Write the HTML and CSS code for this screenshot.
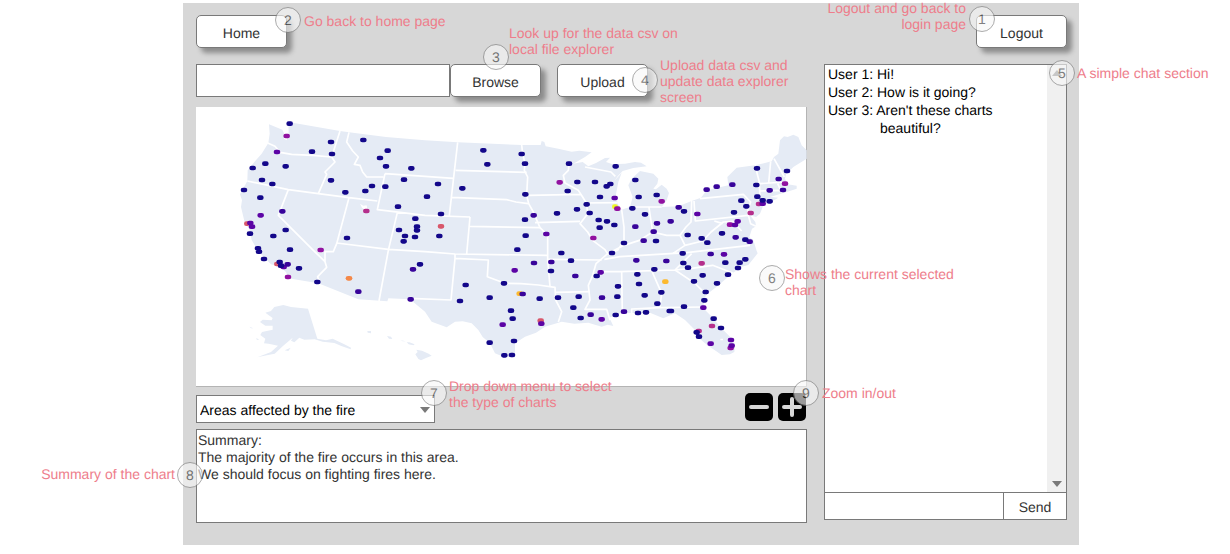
FILE: index.html
```html
<!DOCTYPE html>
<html lang="en">
<head>
<meta charset="utf-8">
<title>Data explorer</title>
<link rel="stylesheet" href="styles.css">
</head>
<body>
<main class="panel">
  <header class="topbar">
    <div class="anchor">
      <button class="btn" type="button">Home</button>
      <span class="marker m2">2</span>
      <p class="note n2">Go back to home page</p>
    </div>
    <div class="anchor">
      <button class="btn" type="button">Logout</button>
      <span class="marker m1">1</span>
      <p class="note n1">Logout and go back to<br>login page</p>
    </div>
  </header>

  <section class="explorer">
    <div class="upload">
      <input class="file" type="text" aria-label="Data csv">
      <div class="anchor">
        <button class="btn" type="button">Browse</button>
        <span class="marker m3">3</span>
        <p class="note n3">Look up for the data csv on<br>local file explorer</p>
      </div>
      <div class="anchor second">
        <button class="btn" type="button">Upload</button>
        <span class="marker m4">4</span>
        <p class="note n4">Upload data csv and<br>update data explorer<br>screen</p>
      </div>
    </div>

    <div class="chart">
      <svg class="map" viewBox="0 0 1833 840" role="img" aria-label="Map of areas affected by the fire">
        <g fill="#e5ebf5">
          <path d="M219 52L259 68L267 85L264 95L272 100L278 75L277 45L432 72L459 76L570 90L687 100L785 106L977 114L1034 114L1037 102L1045 105L1049 118L1087 125L1127 134L1150 131L1187 136L1167 150L1132 170L1160 165L1177 178L1200 168L1227 153L1242 152L1230 165L1250 172L1287 170L1317 165L1335 167L1352 178L1312 183L1280 192L1265 208L1255 222L1277 197L1267 225L1260 262L1265 290L1277 308L1290 304L1302 300L1310 270L1297 235L1307 215L1318 205L1332 192L1372 200L1387 215L1384 230L1372 245L1380 247L1397 233L1412 245L1419 258L1412 280L1397 300L1447 298L1487 282L1515 272L1532 250L1597 235L1594 210L1622 182L1677 175L1727 163L1734 150L1747 140L1752 100L1764 88L1775 90L1792 83L1807 90L1817 115L1832 130L1832 155L1792 180L1770 202L1767 215L1775 232L1802 236L1802 245L1772 255L1722 270L1747 272L1725 285L1702 295L1692 320L1680 330L1662 325L1678 345L1680 358L1668 365L1660 390L1672 400L1682 432L1685 439L1657 474L1635 480L1612 497L1590 515L1562 539L1530 564L1524 585L1522 604L1552 634L1572 659L1602 689L1617 714L1615 735L1602 742L1577 744L1560 732L1537 717L1504 689L1497 669L1467 639L1437 619L1402 634L1362 617L1300 618L1272 619L1240 632L1252 657L1235 653L1217 659L1177 647L1135 650L1097 644L1047 659L1020 677L987 689L957 709L957 751L922 749L897 739L882 709L860 690L847 669L827 649L800 643L777 644L752 661L707 644L687 614L642 577L577 574L574 583L487 577L367 529L277 514L270 495L252 479L225 472L207 454L185 430L167 399L160 365L147 350L135 300L138 280L132 262L154 222L155 190L175 165L197 140L217 108L221 80Z"/>
          <path d="M208 617L225 612L235 600L262 594L285 600L336 605L364 695L390 700L410 695L445 712L465 722L464 727L438 718L415 708L395 706L380 704L356 697L325 698L310 692L295 706L285 701L290 692L260 718L236 740L205 746L184 751L225 735L246 716L218 710L204 709L208 695L193 684L198 675L230 668L230 656L208 656L192 645L200 638L227 640L230 633Z"/>
          <path d="M160 659L172 664L165 664ZM180 694L190 697L183 699ZM266 730L284 722L277 732ZM514 672L525 672L525 679L515 677ZM573 687L585 689L589 696L579 695ZM613 700L630 703L620 703ZM632 706L640 706L656 712L652 715L638 712ZM661 728L678 731L698 740L707 746L690 753L675 760L667 756L658 742L665 735Z"/>
        </g>
        <g fill="none" stroke="#fff" stroke-width="5" stroke-linejoin="round">
          <path d="M215 108L237 118L252 136L287 142L350 145L407 150M432 72L407 150L417 165L387 195L392 202L367 260M154 222L277 248L367 260L459 272L544 282M277 248L247 325L352 430L387 464L392 481L365 509L370 524M459 272L422 410L412 434L387 434L387 464M422 408L577 427L687 434L777 441L1054 445M604 317L577 430L549 582M459 76L452 105L470 132L487 150L475 172L492 175L500 195L512 210L562 210M567 200L544 308L687 325L822 330M567 200L687 208L772 214M785 106L760 325M779 190L992 196M767 271L932 278L960 285L997 290M822 358L1032 362M822 330L812 441"/>
          <path d="M977 114L980 140L987 170L985 190L995 210L992 265L998 290L1012 315L1032 362L1055 385L1055 460L1062 539M999 265L1154 262M1017 347L1152 343M1119 172L1117 190L1102 205L1107 228L1147 250L1160 270L1172 290L1175 320L1152 350L1175 375L1190 400L1227 428L1235 440L1200 470L1190 505L1177 535L1182 579L1167 607L1232 607L1242 640M1162 288L1265 287M1167 180L1245 195L1258 208M1277 308L1284 360L1284 400L1265 430L1235 440M1359 302L1370 375M1302 300L1397 300M1235 440L1284 415L1330 400L1370 375L1412 385L1452 385L1470 360L1485 345L1487 282M1494 282L1498 342L1657 325M1512 275L1642 262L1664 285L1655 310L1657 325L1664 350L1680 358"/>
          <path d="M1452 385L1467 415L1520 402L1545 375L1582 345L1610 343L1637 372M1555 342L1580 350M1225 457L1272 449L1472 437L1662 415M1467 415L1430 440M1210 494L1272 494L1437 489L1487 484L1550 475L1612 499M1437 489L1487 440M1057 457L1217 459M1077 556L1182 554M777 441L777 454L877 459L874 509L927 529L975 530L1027 534L1077 541L1079 579L1097 614L1087 645M777 454L765 579L642 574M1277 494L1279 618M1367 491L1397 559L1392 599M1307 618L1307 606L1392 602L1522 600M1437 489L1497 529L1530 562M1677 175L1690 225L1692 275M1692 230L1770 225M1692 252L1758 250M1724 163L1718 228M1734 155L1765 210M1745 230L1758 258"/>
        </g>
        <path fill="#fff" d="M492 290L502 296L512 295L514 306L506 308L498 302ZM1573 695L1581 695L1581 700L1573 700Z"/>
        <g class="dots">
          <path stroke="#f0f921" d="M1255 299h4"/>
          <path stroke="#fcb92e" d="M1405 524h6M968 560h6"/>
          <path stroke="#f48849" d="M456 514h6"/>
          <path stroke="#d8576b" d="M732 358h6M151 350h4M1031 641h6M241 471h4"/>
          <path stroke="#b52f8c" d="M508 312h6M1514 469h6M1545 657h6M1661 318h6M1505 672h6M1686 291h4"/>
          <path stroke="#9111a0" d="M269 87h6M371 429h6M1088 226h6M1261 305h6M1394 283h6M1764 230h6M1599 353h6M1189 393h6M273 510h6M1601 723h6"/>
          <path stroke="#5c04a5" d="M240 135h6M191 325h6M160 348h6M165 359h6M1253 273h6M1048 381h6M1501 321h6M1622 343h6M1614 354h6M1697 290h6M1581 442h6M260 480h6M917 653h6M1033 650h6M1214 637h6M1541 710h6M1602 699h6M1604 716h6M1519 602h6M953 490h6M1211 496h6"/>
          <path stroke="#38049a" d="M256 313h6M1010 325h6M1445 301h6M1421 343h6M1380 349h6M1370 374h6M1340 401h6M1315 359h6M1758 249h6M1718 250h6M1616 391h6M1658 404h6M272 472h6M484 554h6M648 487h6M1011 468h6M1063 465h6M1135 507h6M977 561h6M1215 572h6M1181 623h6M1281 614h6M1318 460h6M1408 462h6M1559 239h6M1529 248h6M1606 233h6M1745 216h6M1541 441h6M641 577h6"/>
          <path stroke="#13078a" d="M278 50h6M402 105h6M345 134h6M405 141h6M499 99h6M572 131h6M549 153h6M567 178h6M643 184h6M205 170h6M167 183h6M266 178h6M195 219h6M226 231h6M141 249h6M190 272h6M402 220h6M445 256h6M505 252h6M525 237h6M565 239h6M621 218h6M603 299h6M655 335h6M606 369h6M660 359h6M660 370h6M654 390h6M624 387h6M620 403h6M450 393h6M266 369h6M229 387h6M159 380h6M279 428h6M183 424h6M186 434h6"/>
          <path stroke="#13078a" d="M859 130h6M871 172h6M974 141h6M984 170h6M1116 170h6M1256 178h6M1141 225h6M1194 225h6M1229 238h6M1240 231h6M1112 252h6M1209 270h6M985 262h6M796 244h6M723 231h6M690 269h6M732 321h6M727 387h6M984 338h6M986 386h6M1080 319h6M1140 307h6M1169 292h6M1178 318h6M1205 339h6M1230 343h6M1208 362h6M1252 354h6M1281 408h6M961 428h6"/>
          <path stroke="#13078a" d="M1315 219h6M1325 270h6M1379 264h6M1306 304h6M1344 322h6M1461 313h6M1377 402h6M1472 384h6M1514 394h6M1531 407h6M1575 379h6M1611 316h6M1648 298h6M1633 281h6M1681 269h6M1697 280h6M1718 283h6M1678 234h6M1680 184h6M1770 192h6M1645 398h6"/>
          <path stroke="#13078a" d="M201 456h6M248 465h6M252 476h6M306 484h6M361 525h6M669 472h6M806 534h6M789 582h6M878 572h6M921 529h6M942 611h6M947 635h6M951 702h6M878 707h6M922 745h6M945 744h6M1028 575h6M1083 572h6M1145 569h6M1129 602h6M1151 633h6M1062 492h6M1093 438h6M1122 461h6M1245 438h6M1199 507h6M1263 538h6M1261 569h6M1256 624h6"/>
          <path stroke="#13078a" d="M1457 439h6M1459 468h6M1473 482h6M1585 467h6M1628 467h6M1645 457h6M1623 483h6M1593 503h6M1560 529h6M1517 505h6M1491 523h6M1526 555h6M1522 580h6M1461 599h6M1393 556h6M1381 590h6M1418 612h10M1372 487h6M1321 502h6M1326 531h6M1343 565h6M1323 618h6M1347 616h6M1550 635h6M1572 663h6M1499 676h6M1506 689h6"/>
        </g>
      </svg>
      <span class="marker m6">6</span>
      <p class="note n6">Shows the current selected<br>chart</p>
    </div>

    <div class="tools">
      <div class="anchor picker">
        <select class="select" aria-label="Type of chart">
          <option>Areas affected by the fire</option>
        </select>
        <svg class="caret" viewBox="0 0 10 6" aria-hidden="true"><path d="M0 0h10L5 6z"/></svg>
        <span class="marker m7">7</span>
        <p class="note n7">Drop down menu to select<br>the type of charts</p>
      </div>
      <div class="anchor zoom">
        <button class="icon" type="button" aria-label="Zoom out"><svg viewBox="0 0 28 28"><rect width="28" height="28" rx="5"/><path d="M6 14h16"/></svg></button>
        <button class="icon" type="button" aria-label="Zoom in"><svg viewBox="0 0 28 28"><rect width="28" height="28" rx="5"/><path d="M6 14h16M14 6v16"/></svg></button>
        <span class="marker m9">9</span>
        <p class="note n9">Zoom in/out</p>
      </div>
    </div>

    <div class="summary">
      <p>Summary:</p>
      <p>The majority of the fire occurs in this area.</p>
      <p>We should focus on fighting fires here.</p>
      <span class="marker m8">8</span>
      <p class="note n8">Summary of the chart</p>
    </div>
  </section>

  <section class="chat">
    <div class="log">
      <ul class="messages">
        <li>User 1: Hi!</li>
        <li>User 2: How is it going?</li>
        <li>User 3: Aren't these charts<span class="wrapped">beautiful?</span></li>
      </ul>
      <div class="scroll" aria-hidden="true">
        <svg viewBox="0 0 10 6"><path d="M0 6h10L5 0z"/></svg>
        <svg viewBox="0 0 10 6"><path d="M0 0h10L5 6z"/></svg>
      </div>
    </div>
    <form class="compose">
      <input class="message" type="text" aria-label="Message">
      <button class="send" type="button">Send</button>
    </form>
    <span class="marker m5">5</span>
    <p class="note n5">A simple chat section</p>
  </section>
</main>
</body>
</html>
```
FILE: styles.css
```css
* { box-sizing: border-box; }
body {
  margin: 0;
  background: #fff;
  color: #333;
  font: 14px/16px "Liberation Sans", Arial, sans-serif;
  text-rendering: geometricPrecision;
}
p, ul { margin: 0; padding: 0; }
button, input, select { font: inherit; color: inherit; margin: 0; text-rendering: inherit; }

.panel {
  display: grid;
  grid-template-columns: minmax(0, 1fr) 243px;
  gap: 16px 17px;
  margin: 3px 151px 8px 183px;
  padding: 12px 12px 22px 13px;
  background: #d7d7d7;
}
.topbar {
  grid-column: 1 / -1;
  display: flex;
  justify-content: space-between;
}
.anchor { position: relative; }
.btn {
  display: block;
  width: 91px;
  height: 33px;
  padding: 2px 0 0;
  border: 1px solid #797979;
  border-radius: 5px;
  background: #fff;
  box-shadow: 5px 5px 5px rgba(0, 0, 0, .35);
}

.upload { display: flex; margin-bottom: 10px; }
.second { margin-left: 16px; }
.file {
  width: 254px;
  height: 33px;
  border: 1px solid #797979;
  background: #fff;
}

.chart {
  position: relative;
  background: #fff;
  box-shadow: inset -1px -1px #b4b4b4;
}
.map { display: block; width: 100%; height: auto; }
.dots { fill: none; stroke-width: 14; stroke-linecap: round; }

.tools {
  display: flex;
  justify-content: space-between;
  height: 30px;
  margin: 6px 0;
}
.picker { align-self: flex-end; width: 239px; }
.select {
  display: block;
  width: 100%;
  height: 28px;
  padding: 2px 3px 0;
  border: 1px solid #797979;
  border-radius: 0;
  background: #fff;
  color: #000;
  appearance: none;
}
.caret {
  position: absolute;
  top: 12px;
  right: 5px;
  width: 10px;
  height: 6px;
  fill: #797979;
}
.zoom { display: flex; align-items: flex-start; gap: 5px; padding-right: 1px; }
.icon { width: 28px; height: 28px; padding: 0; border: 0; background: none; }
.icon svg { display: block; fill: #000; stroke: none; }
.icon path { stroke: #d7d7d7; stroke-width: 4; stroke-linecap: round; }

.summary {
  position: relative;
  height: 94px;
  padding: 2px 1px;
  border: 1px solid #797979;
  background: #fff;
  line-height: 17px;
}

.chat {
  position: relative;
  display: flex;
  flex-direction: column;
  margin-bottom: 3px;
}
.log {
  flex: 1;
  display: flex;
  border: 1px solid #797979;
  background: #fff;
}
.messages {
  flex: 1;
  padding-left: 3px;
  color: #000;
  line-height: 18px;
  list-style: none;
}
.wrapped { display: block; padding-left: 52px; }
.scroll {
  display: flex;
  flex-direction: column;
  justify-content: space-between;
  align-items: center;
  width: 19px;
  padding: 5px 0;
  background: #f0f0f0;
}
.scroll svg { width: 10px; height: 6px; fill: #797979; }
.compose { display: flex; height: 27px; }
.message {
  flex: 1;
  min-width: 0;
  border: 1px solid #797979;
  border-width: 0 0 1px 1px;
  background: #fff;
}
.send {
  width: 64px;
  padding: 2px 0 0;
  border: 1px solid #797979;
  border-top: 0;
  background: #fff;
}

.marker {
  position: absolute;
  z-index: 1;
  width: 26px;
  height: 26px;
  border: 1px solid #797979;
  border-radius: 50%;
  background: #f7f7f7;
  color: #333;
  line-height: 24px;
  text-align: center;
  opacity: .62;
}
.note {
  position: absolute;
  z-index: 1;
  color: #ee7d8b;
  line-height: 16px;
  white-space: nowrap;
}
.m1 { top: -9px; left: -7px; }
.n1 { top: -15px; right: 101px; text-align: right; }
.m2 { top: -8px; left: 79px; }
.n2 { top: -2px; left: 108px; }
.m3 { top: -20px; left: 33px; }
.n3 { top: -39px; left: 59px; }
.m4 { top: 3px; left: 75px; }
.n4 { top: -7px; left: 103px; }
.m5 { top: -4px; right: -8px; }
.n5 { top: 1px; left: 253px; }
.m6 { top: 158px; right: 22px; }
.n6 { top: 159px; left: calc(100% - 22px); }
.m7 { top: -15px; right: -12px; }
.n7 { top: -17px; left: 253px; }
.m8 { top: 32px; left: -20px; }
.n8 { top: 36px; right: calc(100% + 22px); }
.m9 { top: -13px; right: -12px; }
.n9 { top: -8px; left: calc(100% + 15px); }
```
